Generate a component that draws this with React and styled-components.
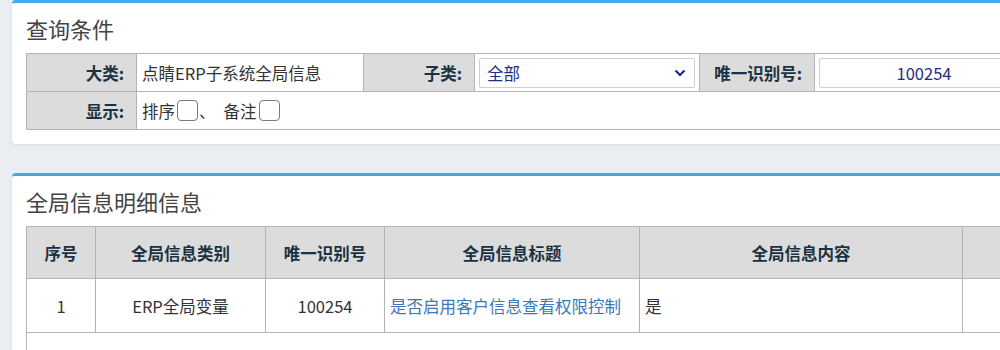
import React from "react";
import styled, { createGlobalStyle } from "styled-components";

const GlobalStyle = createGlobalStyle`
  html, body {
    margin: 0;
    padding: 0;
    background: #eaedf1;
    overflow: hidden;
    font-family: "Noto Sans CJK SC", "Noto Sans", sans-serif;
  }
`;

const Page = styled.div`
  width: 1200px;
  padding-left: 12px;
  display: flex;
  flex-direction: column;
  gap: 29px;
`;

const Card = styled.div`
  background: #fff;
  border-top: 3px solid #42a7e6;
  border-radius: 4px;
  box-shadow: 0 1px 3px rgba(0, 0, 0, 0.08);
  padding: 0 14px ${(p) => p.$bottom || 14}px 14px;
`;

const CardTitle = styled.div`
  height: 50px;
  line-height: 50px;
  font-size: 22px;
  color: #444;
`;

const Table = styled.table`
  border-collapse: collapse;
  table-layout: fixed;
  width: ${(p) => p.$width}px;
  font-size: 16.5px;
`;

const LabelTd = styled.td`
  background: #dcdcdc;
  border: 1px solid #b4b4b4;
  text-align: right;
  font-weight: bold;
  color: #1a3242;
  padding: 0 12px 0 0;
  height: 37px;
`;

const ValueTd = styled.td`
  border: 1px solid #b4b4b4;
  color: #333;
  padding: 0 ${(p) => (p.$tight ? 4 : 5)}px;
  height: 37px;
`;

const InlineRow = styled.div`
  display: flex;
  align-items: center;
`;

const Check = styled.span`
  display: inline-block;
  width: 19px;
  height: 19px;
  border: 1.5px solid #7a7a7a;
  border-radius: 4px;
  background: #fff;
  margin: 0 1px 0 2px;
`;

const Sep = styled.span`
  margin-right: 8px;
`;

const SelectBox = styled.div`
  height: 28px;
  border: 1px solid #cfcfcf;
  border-radius: 2px;
  display: flex;
  align-items: center;
  justify-content: space-between;
  padding: 0 8px 0 7px;
  color: #1f2c82;
`;

const InputBox = styled.div`
  box-sizing: border-box;
  height: 30px;
  border: 1px solid #cfcfcf;
  border-radius: 2px;
  width: 300px;
  display: flex;
  align-items: center;
  justify-content: center;
  color: #1f2c82;
  padding-right: 90px;
`;

const Th = styled.th`
  background: #dcdcdc;
  border: 1px solid #b4b4b4;
  color: #1a3242;
  font-weight: bold;
  height: 51px;
  padding: 0;
`;

const Td = styled.td`
  border: 1px solid #b4b4b4;
  color: #333;
  height: 53px;
  padding: 0 5px;
  text-align: ${(p) => p.$align || "center"};
`;

const LinkText = styled.span`
  color: #3c78b8;
`;

const FootTd = styled.td`
  border: 1px solid #b4b4b4;
  height: 40px;
`;

const Chevron = () => (
  <svg width="12" height="8" viewBox="0 0 12 8">
    <polyline points="1.5,1.5 6,6 10.5,1.5" fill="none" stroke="#1f2c82" strokeWidth="2.2" />
  </svg>
);

const rows = [
  { no: 1, type: "ERP全局变量", code: "100254", title: "是否启用客户信息查看权限控制", content: "是" },
];

const App = () => {
  return (
    <Page>
      <GlobalStyle />
      <Card>
        <CardTitle>查询条件</CardTitle>
        <Table $width={1100}>
          <colgroup>
            <col style={{ width: 110 }} />
            <col style={{ width: 227 }} />
            <col style={{ width: 111 }} />
            <col style={{ width: 225 }} />
            <col style={{ width: 115 }} />
            <col />
          </colgroup>
          <tbody>
            <tr>
              <LabelTd>大类:</LabelTd>
              <ValueTd>点睛ERP子系统全局信息</ValueTd>
              <LabelTd>子类:</LabelTd>
              <ValueTd $tight>
                <SelectBox>
                  <span>全部</span>
                  <Chevron />
                </SelectBox>
              </ValueTd>
              <LabelTd>唯一识别号:</LabelTd>
              <ValueTd $tight>
                <InputBox>100254</InputBox>
              </ValueTd>
            </tr>
            <tr>
              <LabelTd>显示:</LabelTd>
              <ValueTd colSpan={5}>
                <InlineRow>
                  排序<Check />
                  <Sep>、</Sep>
                  备注<Check />
                </InlineRow>
              </ValueTd>
            </tr>
          </tbody>
        </Table>
      </Card>

      <Card $bottom={40}>
        <CardTitle>全局信息明细信息</CardTitle>
        <Table $width={1100}>
          <colgroup>
            <col style={{ width: 69 }} />
            <col style={{ width: 170 }} />
            <col style={{ width: 119 }} />
            <col style={{ width: 255 }} />
            <col style={{ width: 323 }} />
            <col />
          </colgroup>
          <thead>
            <tr>
              <Th>序号</Th>
              <Th>全局信息类别</Th>
              <Th>唯一识别号</Th>
              <Th>全局信息标题</Th>
              <Th>全局信息内容</Th>
              <Th></Th>
            </tr>
          </thead>
          <tbody>
            {rows.map((r) => (
              <tr key={r.no}>
                <Td>{r.no}</Td>
                <Td>{r.type}</Td>
                <Td>{r.code}</Td>
                <Td $align="left">
                  <LinkText>{r.title}</LinkText>
                </Td>
                <Td $align="left">{r.content}</Td>
                <Td></Td>
              </tr>
            ))}
            <tr>
              <FootTd colSpan={6}></FootTd>
            </tr>
          </tbody>
        </Table>
      </Card>
    </Page>
  );
};

export default App;
